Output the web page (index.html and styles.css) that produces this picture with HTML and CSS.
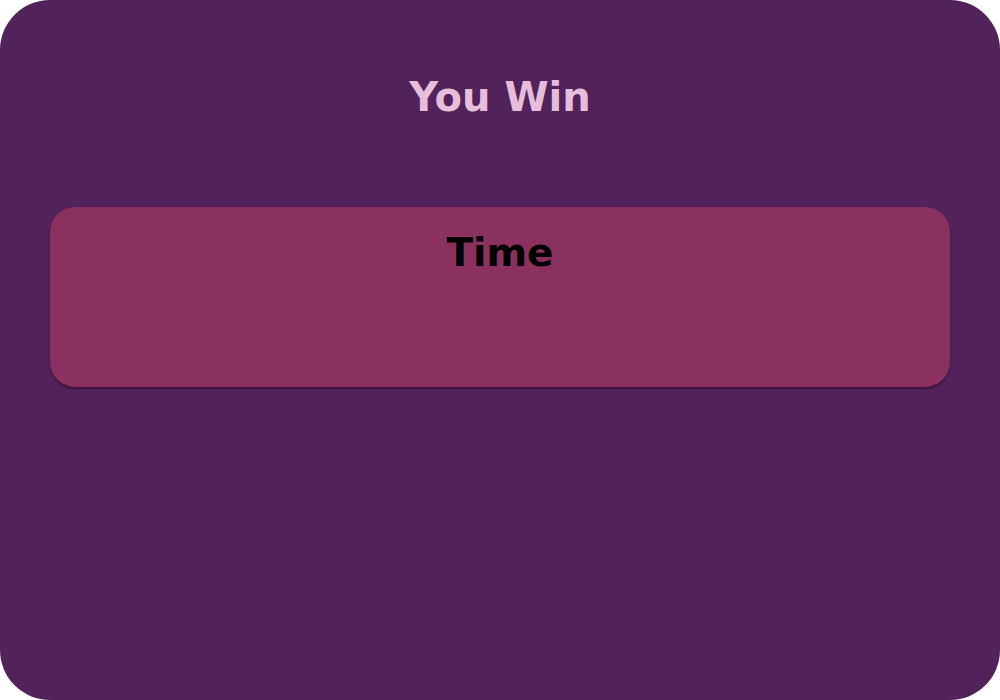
FILE: index.html
```html
<!DOCTYPE html>
<html lang="en">
<head>
<meta charset="utf-8">
<title>You Win</title>
<link rel="stylesheet" href="styles.css">
</head>
<body>
<main class="screen">
  <h1 class="title">You Win</h1>
  <section class="card">
    <h2 class="card-title">Time</h2>
  </section>
</main>
</body>
</html>
```

FILE: styles.css
```css
html, body {
  margin: 0;
  padding: 0;
  background: #ffffff;
}

.screen {
  box-sizing: border-box;
  width: 1000px;
  height: 700px;
  background: #52225a;
  border-radius: 50px;
  padding: 73px 50px 0;
  display: flex;
  flex-direction: column;
  font-family: "DejaVu Sans", "Open Sans", sans-serif;
}

.title {
  margin: 0;
  height: 48px;
  line-height: 48px;
  font-size: 40px;
  font-weight: 700;
  text-align: center;
  color: #e6bedb;
}

.card {
  margin-top: 86px;
  height: 180px;
  box-sizing: border-box;
  padding-top: 22px;
  background: #8b3160;
  border-radius: 25px;
  box-shadow: 0 2px 2px rgba(40, 10, 40, 0.6);
}

.card-title {
  margin: 0;
  height: 48px;
  line-height: 48px;
  font-size: 39px;
  font-weight: 700;
  text-align: center;
  color: #000000;
}
```
